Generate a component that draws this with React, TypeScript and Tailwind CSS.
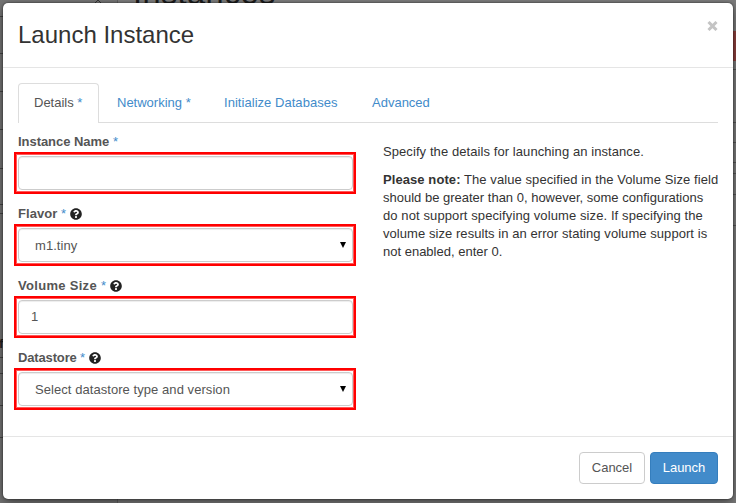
import React from "react";
import { FaQuestionCircle } from "react-icons/fa";

const Star = () => <span className="font-normal text-[#428bca]">*</span>;

type FieldProps = { label: string; labelClass: string; value: string; help?: boolean; select?: boolean };

function Field({ label, labelClass, value, help, select }: FieldProps) {
  return (
    <div className="h-[72px] pl-[4px]">
      <div className="flex h-[21px] items-center font-bold leading-[18px] text-[#555]">
        <span className={`${labelClass} shrink-0 whitespace-nowrap`}>{label}</span>
        <Star />
        {help && <FaQuestionCircle size={12} className="ml-[4px] text-[#222]" />}
      </div>
      <div className="-ml-[4px] h-[42px] w-[342px] border-2 border-[#f00] py-[2px] pr-[1px] pl-[2px] shadow-[inset_0_0_0_1px_#ff5858]">
        <div
          className={`flex h-[34px] items-center justify-between rounded border border-[#ccc] bg-white pr-[5px] text-[#555] shadow-[inset_0_1px_1px_rgba(0,0,0,0.075)] ${select ? "pl-[16px] tracking-[0.06px]" : "pl-[12px]"}`}
        >
          <span className={select ? "pt-[2px]" : ""}>{value}</span>
          {select && (
            <svg width="8" height="8" viewBox="0 0 8 8">
              <path d="M1 1h6L4 7z" fill="#000" />
            </svg>
          )}
        </div>
      </div>
    </div>
  );
}

function Backdrop() {
  return (
    <div className="absolute inset-0 overflow-hidden bg-[#7c7c7c]">
      <div className="absolute top-0 left-0 h-full w-[118px] border-r border-[#606060] bg-[#757575]" />
      {[16, 53, 91, 129, 168, 204, 213, 357, 373, 405, 437].map((y) => (
        <div key={y} className="absolute left-0 h-px w-[3px] bg-[#454545]" style={{ top: y }} />
      ))}
      <div className="absolute top-[335px] -left-[1px] text-[13px] font-bold text-[#222]">f</div>
      <svg className="absolute top-0 left-[93px]" width="10" height="5" viewBox="0 0 10 5">
        <path d="M1 4l4-4 4 4" fill="none" stroke="#333" />
      </svg>
      <div className="absolute -top-[25px] left-[133px] text-[32.5px] leading-[36px] tracking-[0.4px] text-[#1b1b1b]">Instances</div>
      <div className="absolute top-[31px] right-0 h-[30px] w-[4px] bg-[#8f403e]" />
      {[69, 122, 142, 162, 173, 194, 225].map((y) => (
        <div key={y} className="absolute right-0 h-px w-[4px] bg-[#555]" style={{ top: y }} />
      ))}
    </div>
  );
}

const tabs = [
  { name: "Networking", star: true, width: "w-[107px]" },
  { name: "Initialize Databases", star: false, width: "w-[148px] tracking-[0.04px]" },
  { name: "Advanced", star: false, width: "w-[90px]" },
];

export default function App() {
  return (
    <div className="relative h-[503px] w-[736px] overflow-hidden p-[3px] font-['Liberation_Sans',Arial,sans-serif] text-[13px] leading-[18px] text-[#333]">
      <Backdrop />
      <div className="relative flex h-[496px] w-[730px] flex-col rounded-[5px] bg-white shadow-[0_4px_12px_rgba(0,0,0,0.45),0_0_2px_rgba(0,0,0,0.7)]">
        <header className="flex h-[65px] shrink-0 justify-between border-b border-[#e5e5e5] px-[15px]">
          <h1 className="pt-[15px] text-[24px] leading-[34px]">Launch Instance</h1>
          <button className="flex h-[46px] items-center" aria-label="Close">
            <svg width="11" height="10" viewBox="0 0 11 10">
              <path d="M1.5 1l8 8M9.5 1l-8 8" stroke="#c4c4c4" strokeWidth="3" />
            </svg>
          </button>
        </header>
        <main className="flex-1 px-[15px] pt-[15px]">
          <nav className="flex h-[40px] border-b border-[#ddd] text-[#428bca]">
            <div className="h-[40px] w-[81px] rounded-t border border-b-0 border-[#ddd] bg-white pt-[10px] pl-[15px] text-[#555]">
              Details <Star />
            </div>
            {tabs.map((t) => (
              <div key={t.name} className={`${t.width} shrink-0 pt-[11px] pl-[18px] whitespace-nowrap`}>
                {t.name} {t.star && <Star />}
              </div>
            ))}
          </nav>
          <div className="flex">
            <section className="-ml-[4px] w-[342px] shrink-0 pt-[8px]">
              <Field label="Instance Name" labelClass="w-[95px] -tracking-[0.05px]" value="" />
              <Field label="Flavor" labelClass="w-[43px] tracking-[0.05px]" value="m1.tiny" help select />
              <Field label="Volume Size" labelClass="w-[83px] tracking-[0.3px]" value="1" help />
              <Field label="Datastore" labelClass="w-[62px] -tracking-[0.15px]" value="Select datastore type and version" help select />
            </section>
            <section className="ml-[27px] pt-[20px] whitespace-nowrap">
              <p className="mb-[10px] tracking-[0.08px]">Specify the details for launching an instance.</p>
              <p>
                <span className="tracking-[0.08px]"><b>Please note:</b> The value specified in the Volume Size field</span><br />
                should be greater than 0, however, some configurations<br />
                <span className="tracking-[0.1px]">do not support specifying volume size. If specifying the</span><br />
                <span className="tracking-[0.06px]">volume size results in an error stating volume support is</span><br />
                not enabled, enter 0.
              </p>
            </section>
          </div>
        </main>
        <footer className="flex h-[63px] shrink-0 justify-end gap-[5px] border-t border-[#e5e5e5] px-[15px] pt-[15px]">
          <button className="h-[32px] w-[66px] rounded border border-[#ccc] bg-white text-[#555]">Cancel</button>
          <button className="h-[32px] w-[68px] rounded border border-[#357ebd] bg-[#428bca] text-white">Launch</button>
        </footer>
      </div>
    </div>
  );
}
